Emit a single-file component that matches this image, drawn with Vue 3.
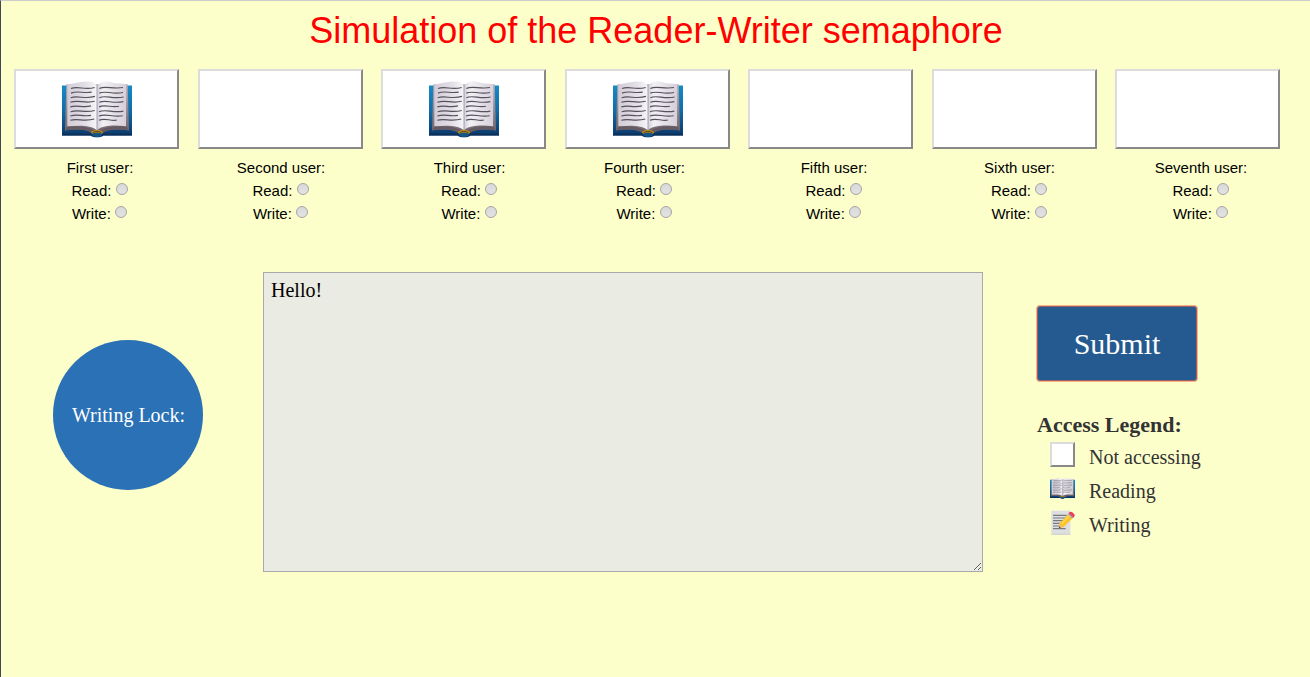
<script setup>
import { ref, h } from 'vue'

const users = ref([
  { name: 'First', state: 'read' },
  { name: 'Second', state: 'none' },
  { name: 'Third', state: 'read' },
  { name: 'Fourth', state: 'read' },
  { name: 'Fifth', state: 'none' },
  { name: 'Sixth', state: 'none' },
  { name: 'Seventh', state: 'none' },
])
const message = ref('Hello!')

const lines = [
  'M27 23C50 14 66 29 98 20', 'M27 37C50 28 62 39 89 34', 'M26 51C50 43 68 57 99 47',
  'M25 65C50 56 68 70 98 62', 'M25 79C48 72 60 83 87 76', 'M26 94C50 86 68 98 98 90',
  'M25 107C48 99 60 110 87 105', 'M25 120C46 113 66 125 97 116',
  'M112 23C130 13 152 26 183 20', 'M112 37C130 28 150 42 183 35', 'M112 51C132 42 151 56 185 49',
  'M112 65C132 56 150 70 184 63', 'M111 79C129 70 150 83 171 77', 'M111 94C132 84 152 99 184 92',
  'M111 107C132 98 150 111 182 106', 'M111 120C128 111 147 124 165 119',
]
const BookIcon = () =>
  h('svg', { viewBox: '0 0 210 174', preserveAspectRatio: 'none' }, [
    h('defs', [
      h('linearGradient', { id: 'cover', x1: 0, y1: 0, x2: 0, y2: 1 }, [
        h('stop', { offset: '0', 'stop-color': '#168bc6' }),
        h('stop', { offset: '.5', 'stop-color': '#126aa5' }),
        h('stop', { offset: '1', 'stop-color': '#0b3566' }),
      ]),
      h('linearGradient', { id: 'leftPage' }, [
        h('stop', { offset: '0', 'stop-color': '#d3ccd6' }),
        h('stop', { offset: '.6', 'stop-color': '#e3dfe7' }),
        h('stop', { offset: '1', 'stop-color': '#f8f6f9' }),
      ]),
      h('linearGradient', { id: 'rightPage' }, [
        h('stop', { offset: '0', 'stop-color': '#d3ced9' }),
        h('stop', { offset: '.2', 'stop-color': '#f3f0f5' }),
        h('stop', { offset: '1', 'stop-color': '#d6cfda' }),
      ]),
      h('linearGradient', { id: 'edge', x1: 0, y1: 0, x2: 0, y2: 1 }, [
        h('stop', { offset: '0', 'stop-color': '#b5adb6' }),
        h('stop', { offset: '1', 'stop-color': '#70656c' }),
      ]),
    ]),
    h('path', { d: 'M0 14H210V166H125C117 174 93 174 85 166H0Z', fill: 'url(#cover)' }),
    h('path', { d: 'M0 160H210V166H0Z', fill: '#0b315b' }),
    h('path', { d: 'M13 10L9 151C40 146 74 147 90 159H120C137 147 170 146 201 151L197 10Z', fill: 'url(#edge)' }),
    h('path', { d: 'M16 139C49 136 79 138 105 156C131 138 161 136 194 139L201 151C170 145 136 148 119 158H91C74 148 40 145 9 151Z', fill: '#665b62' }),
    h('path', { d: 'M16 10C47 6 69-2 91 3Q102 8 105 16V150C84 133 50 136 16 138Z', fill: 'url(#leftPage)' }),
    h('path', { d: 'M105 16C112 4 128-1 144 3C161 9 178 7 193 10L192 138C158 135 125 134 105 150Z', fill: 'url(#rightPage)' }),
    h('path', { d: 'M105 14V149', stroke: '#9790a1', 'stroke-width': 2.5 }),
    h('path', { d: lines.join(''), fill: 'none', stroke: '#55525b', 'stroke-width': 3.5 }),
    h('path', { d: 'M86 157C94 146 116 146 124 157L116 164C110 160 100 160 94 164Z', fill: '#b78b18' }),
    h('path', { d: 'M92 158C98 153 112 153 118 158', fill: 'none', stroke: '#4d4427', 'stroke-width': 3 }),
    h('path', { d: 'M89 162Q105 154 121 162L116 169Q105 174 94 169Z', fill: '#155488' }),
  ])
</script>

<template>
  <main class="page">
    <h1>Simulation of the Reader-Writer semaphore</h1>

    <section class="screens">
      <div v-for="user in users" :key="user.name" class="screen">
        <BookIcon v-if="user.state === 'read'" class="book" />
      </div>
    </section>

    <section class="controls">
      <div v-for="user in users" :key="user.name" class="user">
        <div>{{ user.name }} user:</div>
        <label>Read: <i class="radio"></i></label>
        <label>Write: <i class="radio"></i></label>
      </div>
    </section>

    <section class="workspace">
      <div class="lock">Writing Lock:</div>
      <textarea v-model="message" spellcheck="false"></textarea>
      <aside>
        <button type="button">Submit</button>
        <h2>Access Legend:</h2>
        <ul>
          <li><span class="empty"></span><span>Not accessing</span></li>
          <li><BookIcon class="mini-book" /><span>Reading</span></li>
          <li>
            <svg class="note" viewBox="0 0 75 75">
              <path d="M4 2H61V74H4Z" fill="#dedfe0" />
              <path d="M4 71H61V74H4Z" fill="#cbcdd0" />
              <path d="M9 16H50M9 24H45M9 32H39M9 40H35M9 48H28M9 56H47" stroke="#77797c" stroke-width="3.5" />
              <path d="M29 40L56 11L69 23L41 51L27 55Z" fill="#ffc226" />
              <path d="M35 42L60 16" stroke="#ffdc55" stroke-width="4" />
              <path d="M29 41L39 51L27 55Z" fill="#edbd78" />
              <path d="M28 49L32 52L26 56Z" fill="#454047" />
              <path d="M53 12L58 8L71 22L66 26Z" fill="#9eabb5" />
              <path d="M56 9Q61 3 67 7L73 13Q76 18 70 23Z" fill="#ed3e5a" />
            </svg><span>Writing</span>
          </li>
        </ul>
      </aside>
    </section>
  </main>
</template>

<style>
body { margin: 0; background: #fdffcb; }
</style>

<style scoped>
* { box-sizing: border-box; }
.page {
  height: 677px;
  overflow: hidden;
  border-top: 1px solid #ccc;
  border-left: 1px solid #45465a;
  background: #fdffcb;
  font-family: "Liberation Serif", "Times New Roman", serif;
}
h1 {
  margin: 9px 0 0;
  height: 42px;
  padding-left: 1px;
  text-align: center;
  color: #f00;
  font: 400 36px/42px "Liberation Sans", Arial, sans-serif;
}
.screens {
  display: flex;
  justify-content: space-between;
  margin: 17px 30px 0 13px;
}
.screen {
  width: 165px;
  height: 80px;
  padding: 10px 0 0 46px;
  border: 2px solid;
  border-color: #dcdcdc #888 #888 #dcdcdc;
  background: #fff;
}
.book { display: block; width: 70px; height: 57px; }
.controls {
  display: grid;
  grid-template-columns: 182px 180px 197px 153px 226px 145px 218px;
  margin: 7px 0 0 8px;
  text-align: center;
  color: #000;
  font: 15px/23px "Liberation Sans", Arial, sans-serif;
}
.user > * { display: block; height: 23px; }
.radio {
  display: inline-block;
  width: 12px;
  height: 12px;
  margin-right: 1px;
  border: 1px solid #a5a5a5;
  border-radius: 50%;
  background: linear-gradient(#d9d9d9, #e3e3e3);
  vertical-align: 1px;
}
.workspace { display: flex; margin-top: 47px; }
.lock {
  width: 150px;
  height: 150px;
  margin: 68px 60px 0 52px;
  padding-left: 1px;
  border-radius: 50%;
  background: #2a71b5;
  color: #fff;
  font-size: 20px;
  line-height: 150px;
  text-align: center;
}
textarea {
  width: 720px;
  height: 300px;
  margin: 0;
  padding: 6px 7px;
  border: 1px solid #a9a9a9;
  outline: 0;
  background: #eaebe2;
  color: #000;
  font: 20px/23px "Liberation Serif", "Times New Roman", serif;
}
aside { margin: 33px 0 0 53px; color: #333; }
button {
  display: block;
  width: 162px;
  height: 77px;
  padding: 0;
  border: 1px solid #ffb080;
  border-radius: 4px;
  background: #245a90;
  box-shadow: inset 0 0 0 1px #9a6265;
  color: #fff;
  font: 30px/74px "Liberation Serif", "Times New Roman", serif;
}
h2 { margin: 30px 0 0 1px; font-size: 22px; line-height: 26px; }
ul { margin: 4px 0 0 14px; padding: 0; list-style: none; font-size: 20px; line-height: 30px; }
li { display: flex; height: 34px; }
.empty, .mini-book, .note { width: 25px; height: 25px; margin-right: 14px; }
.empty { border: 2px solid; border-color: #dcdcdc #888 #888 #dcdcdc; background: #fff; }
.mini-book { height: 21px; margin-top: 2px; }
</style>
